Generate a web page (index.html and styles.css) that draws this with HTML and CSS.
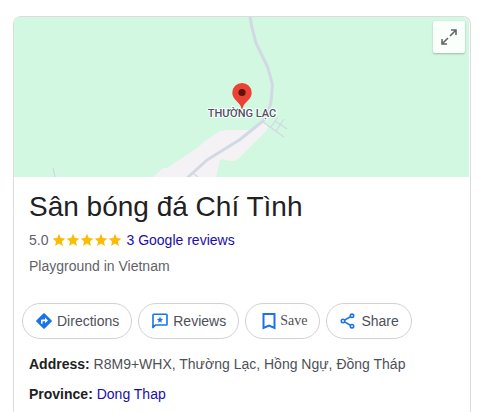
FILE: index.html
```html
<!DOCTYPE html>
<html lang="en">
<head>
  <meta charset="UTF-8">
  <meta name="viewport" content="width=device-width, initial-scale=1.0">
  <title>Sân bóng đá Chí Tình</title>
  <link rel="stylesheet" href="styles.css">
</head>
<body>
  <div class="card">
    <div class="map">
      <svg class="map-canvas" viewBox="0 0 455 160" preserveAspectRatio="xMidYMid slice">
        <!-- built-up area -->
        <path fill="#f4f2f4" d="M139 160L149 151H153L183 131L191 124L206 114L213 113H236L249 105L254 108L253 113L241 125L226 140L221 144L216 144L208 142L206 143L202 160Z"/>
        <!-- side streets -->
        <path fill="none" stroke="#d0d8e2" stroke-width="1.2" d="M249 105L270 120M257 110L264 100M262 114L270 102M261 104L273 112M39 151L41 160M179 156L184 160"/>
        <!-- main road -->
        <path fill="none" stroke="#d3d9e4" stroke-width="3" stroke-linejoin="round" d="M236 -1L238 11L242 26L254 51L258.500 68L257 85L254 95L249 104L226 122.500L193 143L173 161"/>
        <text class="map-label" x="228" y="100">THƯỜNG LẠC</text>
        <path fill="#ea4335" d="M228 92C227.300 92 227.200 90.500 226.600 89C225 85 218.300 82 218.300 75.700A9.700 9.700 0 0 1 237.700 75.700C237.700 82 231 85 229.400 89C228.800 90.500 228.700 92 228 92Z"/>
        <circle cx="228" cy="75.500" r="3.600" fill="#5b1210"/>
      </svg>
      <button class="expand" type="button" aria-label="Expand map">
        <svg width="16" height="16" viewBox="0 0 16 16" fill="none" stroke="#666" stroke-width="1.600">
          <path d="M10 1H15V6M15 1L9 7M1 10V15H6M1 15L7 9"/>
        </svg>
      </button>
    </div>

    <div class="info">
      <h1>Sân bóng đá Chí Tình</h1>
      <div class="rating">
        <span>5.0</span>
        <svg class="stars" width="70" height="14" viewBox="0 0 70 14" fill="#fbbc04">
          <defs>
            <path id="star" d="M7 .8L8.800 5.100L13.300 5.500L9.900 8.500L10.900 12.900L7 10.600L3.100 12.900L4.100 8.500L.7 5.500L5.200 5.100Z"/>
          </defs>
          <use href="#star"/>
          <use href="#star" x="14"/>
          <use href="#star" x="28"/>
          <use href="#star" x="42"/>
          <use href="#star" x="56"/>
        </svg>
        <a href="#">3 Google reviews</a>
      </div>
      <div class="category">Playground in Vietnam</div>
    </div>

    <div class="actions">
      <button class="action" type="button">
        <svg width="16" height="16" viewBox="0 0 16 16">
          <path fill="#1a73e8" d="M8.700 .5L15.500 7.300Q16.200 8 15.500 8.700L8.700 15.500Q8 16.200 7.300 15.500L.5 8.700Q-.2 8 .5 7.300L7.300 .5Q8 -.2 8.700 .5Z"/>
          <path fill="#fff" d="M5 10.800V7.700Q5 6.600 6.100 6.600H9V4.600L12 7.500L9 10.300V8.300H6.600V10.800Z"/>
        </svg>
        Directions
      </button>
      <button class="action" type="button">
        <svg width="16" height="16" viewBox="0 0 16 16">
          <path fill="none" stroke="#1a73e8" stroke-width="1.600" stroke-linejoin="round" d="M1 14.500V2Q1 1.300 1.700 1.300H14.300Q15 1.300 15 2V11.200Q15 12 14.300 12H3.500Z"/>
          <path fill="#1a73e8" d="M8 3.700L8.900 5.800L11.100 6L9.400 7.500L9.900 9.700L8 8.500L6.100 9.700L6.600 7.500L4.900 6L7.100 5.800ZM.5 12H3.500L.5 15.500Z"/>
        </svg>
        Reviews
      </button>
      <button class="action action-save" type="button">
        <svg width="17" height="18" viewBox="0 0 17 18" fill="none" stroke="#1a73e8" stroke-width="2">
          <path d="M4.500 2H15.500V16L10 13.600L4.500 16Z"/>
        </svg>
        Save
      </button>
      <button class="action" type="button">
        <svg width="16" height="16" viewBox="0 0 16 16" fill="none" stroke="#1a73e8" stroke-width="1.600">
          <circle cx="3" cy="8" r="1.700"/>
          <circle cx="12" cy="2.800" r="1.700"/>
          <circle cx="12" cy="13.200" r="1.700"/>
          <path d="M4.500 7.100L10.500 3.700M4.500 8.900L10.500 12.300"/>
        </svg>
        Share
      </button>
    </div>

    <div class="details">
      <div><b>Address:</b> R8M9+WHX, Thường Lạc, Hồng Ngự, Đồng Tháp</div>
      <div><b>Province:</b> <a href="#">Dong Thap</a></div>
    </div>
  </div>
</body>
</html>
```
FILE: styles.css
```css
* {
  box-sizing: border-box;
}

body {
  margin: 0;
  padding: 16px 17px 0 13px;
  background: #fff;
  color: #4d5156;
  font-family: "Liberation Sans", Arial, sans-serif;
  font-size: 14px;
  line-height: 20px;
}

a {
  color: #1a0dab;
  text-decoration: none;
}

.card {
  min-height: calc(100vh - 16px);
  border: 1px solid #dadce0;
  border-bottom: none;
  border-radius: 8px 8px 0 0;
}

.map {
  position: relative;
  height: 160px;
  margin-right: 1px;
  background: #d2f8e2;
  border-radius: 4px 6px 0 0;
  overflow: hidden;
}

.map-canvas {
  display: block;
  width: 100%;
  height: 100%;
}

.map-label {
  font-family: Roboto, sans-serif;
  font-size: 11px;
  font-weight: 500;
  text-anchor: middle;
  fill: #4a5360;
  stroke: #fff;
  stroke-width: 2px;
  stroke-linejoin: round;
  paint-order: stroke;
}

.expand {
  position: absolute;
  top: 4px;
  right: 4px;
  display: flex;
  align-items: center;
  justify-content: center;
  width: 32px;
  height: 32px;
  padding: 0;
  border: none;
  border-radius: 2px;
  background: #fafffc;
  box-shadow: 0 1px 2px rgba(0, 0, 0, 0.25);
  cursor: pointer;
}

.info {
  padding: 12px 15px 0;
}

h1 {
  margin: 0 0 5px;
  color: #202124;
  font-size: 28px;
  font-weight: normal;
  line-height: 36px;
}

.rating {
  display: flex;
  align-items: center;
  gap: 4px;
  margin-bottom: 6px;
  color: #5f6368;
}

.category {
  color: #5f6368;
}

.actions {
  display: flex;
  flex-wrap: wrap;
  gap: 6px;
  padding: 27px 8px 15px;
}

.action {
  display: flex;
  align-items: center;
  gap: 5px;
  height: 36px;
  padding: 0 12px 0 13px;
  border: 1px solid #d2d2d2;
  border-radius: 18px;
  background: #fff;
  color: #4d5156;
  font: inherit;
  cursor: pointer;
}

.action-save {
  gap: 4px;
  font-family: "Liberation Serif", "Times New Roman", serif;
}

.details {
  display: grid;
  gap: 10px;
  padding: 0 15px 15px;
}

.details b {
  color: #202124;
}
```
